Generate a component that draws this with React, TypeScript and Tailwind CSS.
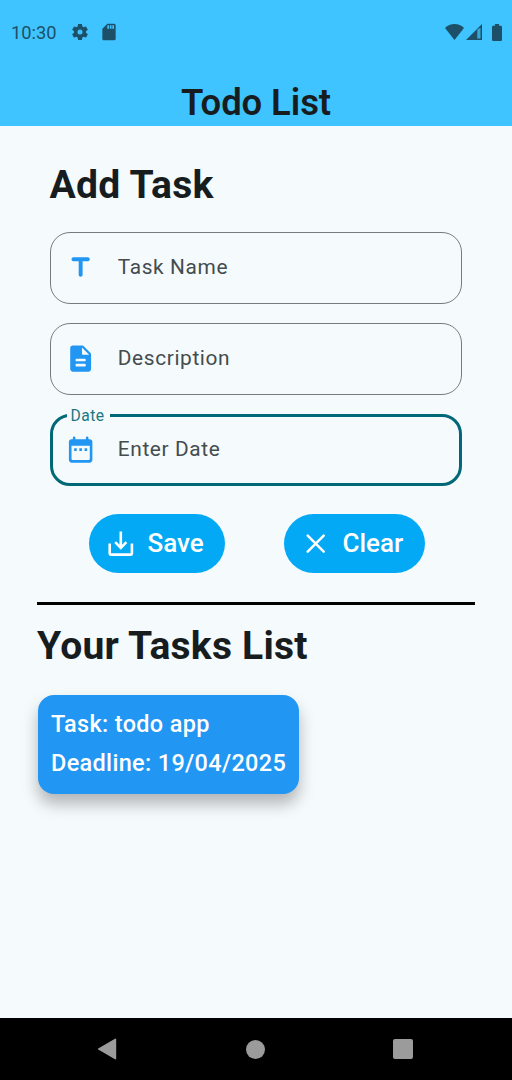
import type { ReactNode } from "react";

function StatusBar() {
  return (
    <div className="flex h-16 items-center pl-[11px] pr-[10px] text-[#1d5068]">
      <span className="mt-px w-[59px] text-[18.3px] leading-6">10:30</span>
      <svg className="h-5 w-5" viewBox="0 0 24 24" fill="currentColor">
        <path d="M19.14 12.94c.04-.3.06-.61.06-.94 0-.32-.02-.64-.07-.94l2.03-1.58c.18-.14.23-.41.12-.61l-1.92-3.32c-.12-.22-.37-.29-.59-.22l-2.39.96c-.5-.38-1.03-.7-1.62-.94l-.36-2.54c-.04-.24-.24-.41-.48-.41h-3.84c-.24 0-.43.17-.47.41l-.36 2.54c-.59.24-1.13.57-1.62.94l-2.39-.96c-.22-.08-.47 0-.59.22L2.74 8.87c-.12.21-.08.47.12.61l2.03 1.58c-.05.3-.09.63-.09.94s.02.64.07.94l-2.03 1.58c-.18.14-.23.41-.12.61l1.92 3.32c.12.22.37.29.59.22l2.39-.96c.5.38 1.03.7 1.62.94l.36 2.54c.05.24.24.41.48.41h3.84c.24 0 .44-.17.47-.41l.36-2.54c.59-.24 1.13-.56 1.62-.94l2.39.96c.22.08.47 0 .59-.22l1.92-3.32c.12-.22.07-.47-.12-.61l-2.01-1.58zM12 15a3 3 0 1 1 0-6 3 3 0 0 1 0 6z" />
      </svg>
      <svg className="ml-[9px] h-5 w-5" viewBox="0 0 24 24" fill="currentColor">
        <path d="M18 2h-8L4.02 8 4 20c0 1.1.9 2 2 2h12c1.1 0 2-.9 2-2V4c0-1.1-.9-2-2-2zm-6 6h-2V4h2v4zm3 0h-2V4h2v4zm3 0h-2V4h2v4z" />
      </svg>
      <div className="ml-auto flex items-center">
        <svg className="h-4 w-[19px]" viewBox="0 0 19 16" fill="currentColor">
          <path d="M9.5 16 0 3.9C2.600 1.500 5.800 0 9.500 0S16.400 1.500 19 3.900z" />
        </svg>
        <svg className="ml-[2px] h-4 w-4" viewBox="0 0 16 16">
          <path d="M16 0v16H0z" fill="currentColor" />
          <path d="M11.300 5.500 14.500 3.800v10.700h-3.200z" fill="#40c4ff" fillOpacity=".75" />
        </svg>
        <svg className="ml-[10px] h-[17px] w-[10px]" viewBox="0 0 11 17" preserveAspectRatio="none" fill="currentColor">
          <path d="M3.200 0h4.600v1.700h2a1.200 1.200 0 0 1 1.200 1.200v12.900A1.200 1.200 0 0 1 9.800 17H1.200A1.200 1.200 0 0 1 0 15.800V2.900a1.200 1.200 0 0 1 1.200-1.200h2z" />
        </svg>
      </div>
    </div>
  );
}

function FieldIcon({ children }: { children: ReactNode }) {
  return (
    <svg className="h-[31.300px] w-[31.300px] shrink-0 text-[#2196f3]" viewBox="0 0 24 24" fill="currentColor">
      {children}
    </svg>
  );
}

function Field({ icon, label }: { icon: ReactNode; label: string }) {
  return (
    <div className="flex h-[72px] items-center rounded-[20px] border border-[#747d7e] pl-[14px]">
      <FieldIcon>{icon}</FieldIcon>
      <span className="ml-[22px] text-[20.860px] tracking-[0.620px] text-[#444c4e]">{label}</span>
    </div>
  );
}

function DateField() {
  return (
    <div className="relative flex h-[72px] items-center rounded-[20px] border-[3px] border-[#006876] pl-[12px]">
      <span className="absolute -top-[13px] left-[14px] bg-[#f5fafd] pl-[4px] pr-[6px] pt-[2px] text-[15.640px] leading-5 tracking-[0.450px] text-[#1b7783]">
        Date
      </span>
      <FieldIcon>
        <path d="M9 11H7v2h2v-2zm4 0h-2v2h2v-2zm4 0h-2v2h2v-2zm2-7h-1V3c0-.55-.45-1-1-1s-1 .45-1 1v1H8V3c0-.55-.45-1-1-1s-1 .45-1 1v1H5c-1.110 0-2 .9-2 2v14c0 1.100.890 2 2 2h14c1.100 0 2-.9 2-2V6c0-1.100-.9-2-2-2zm0 15c0 .550-.450 1-1 1H6c-.550 0-1-.450-1-1V9h14v10z" />
      </FieldIcon>
      <span className="ml-[22px] text-[20.860px] tracking-[0.620px] text-[#444c4e]">Enter Date</span>
    </div>
  );
}

export default function App() {
  return (
    <div className="flex h-[1080px] w-[512px] flex-col overflow-hidden bg-[#f5fafd] font-['Roboto',sans-serif] text-[#171d1e]">
      <header className="h-[126px] shrink-0 bg-[#40c4ff]">
        <StatusBar />
        <h1 className="mt-[19px] text-center text-[36.500px] leading-10 font-semibold tracking-[-0.100px]">Todo List</h1>
      </header>

      <main className="flex-1 pr-[37px] pl-[37px]">
        <section className="pt-[35px] pr-[13px] pl-[12.500px]">
          <h2 className="text-[39.100px] leading-[48px] font-bold tracking-[0.250px]">Add Task</h2>
          <div className="mt-[23px] flex flex-col gap-[19px]">
            <Field
              label="Task Name"
              icon={
                <path d="M5 5.500C5 6.330 5.670 7 6.500 7h4v10.500c0 .830.670 1.500 1.500 1.500s1.500-.670 1.500-1.500V7h4c.830 0 1.500-.670 1.500-1.500S18.330 4 17.500 4h-11C5.670 4 5 4.670 5 5.500z" />
              }
            />
            <Field
              label="Description"
              icon={
                <path d="M14.590 2.590c-.380-.380-.890-.590-1.420-.590H6c-1.100 0-2 .9-2 2v16c0 1.100.890 2 1.990 2H18c1.100 0 2-.9 2-2V8.830c0-.530-.210-1.040-.590-1.410l-4.820-4.830zM15 18H9c-.550 0-1-.450-1-1s.450-1 1-1h6c.550 0 1 .450 1 1s-.450 1-1 1zm0-4H9c-.550 0-1-.450-1-1s.450-1 1-1h6c.550 0 1 .450 1 1s-.450 1-1 1zm-2-6V3.500L18.500 9H14c-.550 0-1-.450-1-1z" />
              }
            />
            <DateField />
          </div>
        </section>

        <div className="mt-7 flex gap-[59px] pl-[52px] text-[26px] font-medium text-white">
          <button className="flex h-[59px] w-[136px] items-center rounded-full bg-[#03a9f4] pl-[19px]">
            <svg className="h-[26px] w-[26px]" viewBox="0 0 26 26" fill="none" stroke="currentColor" strokeWidth="2.600">
              <path d="M1.700 12.500v10.100a1 1 0 0 0 1 1h20.200a1 1 0 0 0 1-1V12.500M12.800.500v16.200M7.200 11.200l5.600 5.600 5.600-5.600" />
            </svg>
            <span className="ml-[13.500px]">Save</span>
          </button>
          <button className="flex h-[59px] w-[141px] items-center rounded-full bg-[#03a9f4] pl-[19px]">
            <svg className="h-[26px] w-[26px]" viewBox="0 0 26 26" fill="none" stroke="currentColor" strokeWidth="2.500">
              <path d="m4.700 4.700 16 16m0-16-16 16" strokeLinecap="round" />
            </svg>
            <span className="ml-[13.500px]">Clear</span>
          </button>
        </div>

        <div className="mt-[29px] h-[3px] bg-black" />

        <h2 className="mt-[17px] text-[39.100px] leading-[48px] font-bold tracking-[0.200px]">Your Tasks List</h2>
        <article className="mt-[25px] ml-px h-[99px] w-[261px] rounded-[16px] bg-[#2196f3] px-[13px] pt-[10px] text-[23.460px] leading-[39px] font-medium tracking-[0.340px] whitespace-nowrap text-white shadow-[0_10px_16px_rgba(0,0,0,0.28)]">
          <p>Task: todo app</p>
          <p>Deadline: 19/04/2025</p>
        </article>
      </main>

      <nav className="flex h-[62px] shrink-0 items-center justify-between bg-black pr-[99px] pl-[97px] text-[#9b9b9b]">
        <svg className="h-[22px] w-5" viewBox="0 0 20 22" fill="currentColor">
          <path d="M18 .700a.8.8 0 0 1 1.200.7v19.200a.8.8 0 0 1-1.200.7L1.200 11.600a.7.7 0 0 1 0-1.200z" />
        </svg>
        <span className="ml-px h-[19px] w-[19px] rounded-full bg-[#9b9b9b]" />
        <span className="h-5 w-5 rounded-[2px] bg-[#9b9b9b]" />
      </nav>
    </div>
  );
}
